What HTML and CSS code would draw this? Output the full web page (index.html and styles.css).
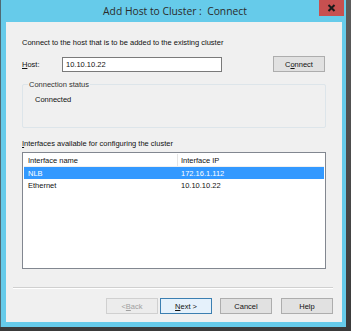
FILE: index.html
```html
<!DOCTYPE html>
<html>
<head>
<meta charset="utf-8">
<link rel="stylesheet" href="styles.css">
</head>
<body>
<div class="screen">
  <div class="frame">
    <div class="titlebar">
      <div class="spacer"></div>
      <div class="title">Add Host to Cluster :&nbsp; Connect</div>
      <div class="closebtn"><svg class="xicon" width="9" height="8" viewBox="0 0 9 8"><path d="M1.5 1 L7.5 7 M7.5 1 L1.5 7" stroke="#1a1a1a" stroke-width="2"/></svg></div>
    </div>
    <div class="client">
      <div class="intro">Connect to the host that is to be added to the existing cluster</div>
      <div class="hostrow">
        <span class="label"><u>H</u>ost:</span>
        <div class="input">10.10.10.22</div>
        <div class="btn connect">C<u>o</u>nnect</div>
      </div>
      <div class="group">
        <div class="legend">Connection status</div>
        <div class="status">Connected</div>
      </div>
      <div class="listlabel"><u>I</u>nterfaces available for configuring the cluster</div>
      <div class="list">
        <div class="row head"><div class="c1">Interface name</div><div class="c2">Interface IP</div></div>
        <div class="row sel"><div class="c1">NLB</div><div class="c2">172.16.1.112</div></div>
        <div class="row"><div class="c1">Ethernet</div><div class="c2">10.10.10.22</div></div>
      </div>
      <div class="sep"></div>
      <div class="buttons">
        <div class="btn disabled">&lt; <u>B</u>ack</div>
        <div class="btn default"><u>N</u>ext &gt;</div>
        <div class="btn cancel">Cancel</div>
        <div class="btn">Help</div>
      </div>
    </div>
  </div>
</div>
</body>
</html>
```
FILE: styles.css
```css
* { box-sizing: border-box; }
html, body { margin: 0; padding: 0; background: #4a4a4a; }
body { width: 351px; height: 331px; overflow: hidden; }
.screen {
  width: 351px; height: 331px;
  background: linear-gradient(#5c5c5c, #3a3a3a);
  padding: 0 5px 4px 0;
}
.frame {
  height: 100%;
  background: #66cbea;
  border-left: 1px solid #4f6a74;
  padding: 0 4px 5px 5px;
  display: flex; flex-direction: column;
}
.titlebar {
  height: 22px; flex: none;
  display: flex; align-items: flex-start;
}
.spacer { width: 25px; flex: none; }
.title {
  flex: 1;
  font-family: "Open Sans", "Noto Sans", sans-serif;
  font-size: 10.3px; color: #2b2b2b;
  text-align: center; line-height: 22px;
}
.closebtn {
  flex: none;
  width: 25px; min-width: 25px; height: 16px;
  margin-right: -2px;
  background-color: #c75050;
  display: flex; align-items: center; justify-content: center;
}
.xicon { display: block; }
.client {
  flex: 1;
  background: #f0f0f0;
  font-family: "Liberation Sans", Arial, sans-serif;
  font-size: 7.5px; color: #111;
  padding: 16px 0 0 16px;
  display: flex; flex-direction: column;
}
u { text-decoration: underline; }
.intro { height: 9px; line-height: 9px; }
.hostrow { display: flex; align-items: center; margin-top: 9px; height: 16px; }
.label { width: 40px; }
.input {
  width: 160px; height: 15px; background: #fff;
  border: 1px solid #7a7a7a; padding-left: 3px; line-height: 13px;
}
.btn {
  width: 52px; height: 16px;
  border: 1px solid #adadad; background: #e1e1e1;
  display: flex; align-items: center; justify-content: center;
}
.connect { margin-left: 51px; }
.group {
  margin-top: 12px; width: 304px; height: 44px;
  border: 1px solid #dde5ea; border-radius: 2px;
  position: relative; padding: 10px 0 0 12px;
}
.legend {
  position: absolute; left: 5px; top: -5px;
  background: #f0f0f0; padding: 0 1px; line-height: 9px; color: #333;
}
.status { line-height: 9px; }
.listlabel { margin-top: 11px; line-height: 9px; }
.list {
  margin-top: 4px; width: 304px; height: 117px;
  border: 1px solid #828790; background: #fff;
  padding: 1px 1px 0 1px;
}
.row { display: flex; height: 12px; align-items: center; }
.row.head { height: 13px; border-bottom: 1px solid #f0f0f0; }
.c1 { width: 154px; padding-left: 4px; }
.c2 { flex: 1; padding-left: 3px; }
.head .c1 { border-right: 1px solid #e5e5e5; height: 100%; display: flex; align-items: center; }
.row.sel { background: #3399ff; color: #fff; }
.sep {
  margin-top: 18px; margin-left: -9px; width: 320px; height: 2px;
  border-top: 1px solid #d0d0d0; border-bottom: 1px solid #ffffff;
}
.buttons { display: flex; margin-top: 9px; margin-left: 84px; }
.buttons .btn { margin-right: 2px; }
.buttons .disabled { color: #a0a0a0; border-color: #d0d0d0; background: #ececec; }
.buttons .default { border-color: #3c7fb1; background: #e5f1fb; }
.buttons .cancel { margin-left: 6px; margin-right: 9px; }
```
